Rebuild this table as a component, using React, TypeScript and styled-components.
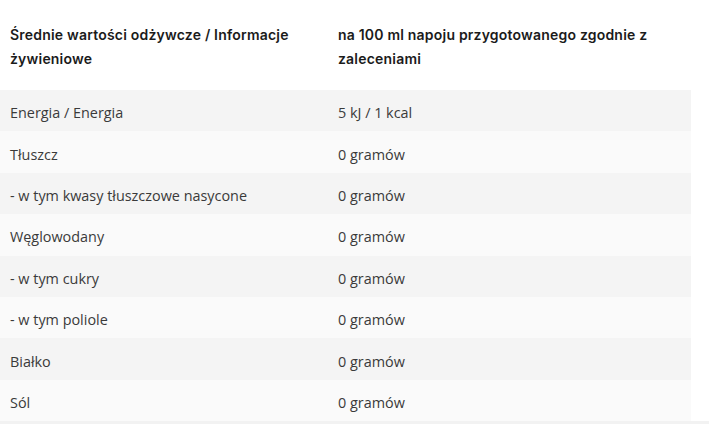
import React from "react";
import styled, { createGlobalStyle } from "styled-components";

const GlobalStyle = createGlobalStyle`
	body {
		margin: 0;
		background: #fff;
	}
`;

const Page = styled.div`
	width: 709px;
	height: 424px;
	display: flex;
	flex-direction: column;
	overflow: hidden;
`;

const Table = styled.div`
	width: 691px;
	display: flex;
	flex-direction: column;
`;

const HeadRow = styled.div`
	display: grid;
	grid-template-columns: 328px 1fr;
	padding: 23px 0 19px 10px;
	background: #fff;
`;

const HeadCell = styled.div`
	font-family: Inter, "Noto Sans", sans-serif;
	font-weight: 600;
	font-size: 14px;
	letter-spacing: 0.2px;
	line-height: 24px;
	color: #1b1b1b;
	padding-right: 20px;
`;

const Row = styled.div<{ shade: boolean }>`
	display: grid;
	grid-template-columns: 328px 1fr;
	height: 41.4px;
	align-items: center;
	padding: 4px 0 0 10px;
	box-sizing: border-box;
	background: ${({ shade }) => (shade ? "#f4f4f4" : "#fafafa")};
`;

const Cell = styled.div`
	font-family: "Open Sans", sans-serif;
	font-size: 14.4px;
	color: #3a3a3a;
`;

const BottomStrip = styled.div`
	width: 100%;
	height: 3px;
	background: #f2f2f2;
`;

const rows: [string, string][] = [
	["Energia / Energia", "5 kJ / 1 kcal"],
	["Tłuszcz", "0 gramów"],
	["- w tym kwasy tłuszczowe nasycone", "0 gramów"],
	["Węglowodany", "0 gramów"],
	["- w tym cukry", "0 gramów"],
	["- w tym poliole", "0 gramów"],
	["Białko", "0 gramów"],
	["Sól", "0 gramów"],
];

export default function App() {
	return (
		<Page>
			<GlobalStyle />
			<Table>
				<HeadRow>
					<HeadCell>Średnie wartości odżywcze / Informacje żywieniowe</HeadCell>
					<HeadCell>na 100 ml napoju przygotowanego zgodnie z zaleceniami</HeadCell>
				</HeadRow>
				{rows.map(([name, value], i) => (
					<Row key={name} shade={i % 2 === 0}>
						<Cell>{name}</Cell>
						<Cell>{value}</Cell>
					</Row>
				))}
			</Table>
			<BottomStrip />
		</Page>
	);
}
